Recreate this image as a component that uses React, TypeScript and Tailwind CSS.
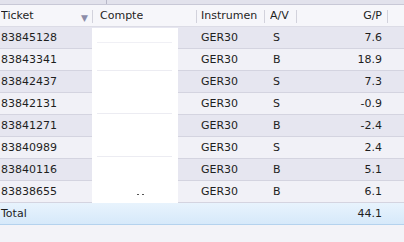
import React from 'react';

interface Trade {
  ticket: string;
  instrument: string;
  side: string;
  pnl: string;
}

const TRADES: Trade[] = [
  { ticket: '83845128', instrument: 'GER30', side: 'S', pnl: '7.6' },
  { ticket: '83843341', instrument: 'GER30', side: 'B', pnl: '18.9' },
  { ticket: '83842437', instrument: 'GER30', side: 'S', pnl: '7.3' },
  { ticket: '83842131', instrument: 'GER30', side: 'S', pnl: '-0.9' },
  { ticket: '83841271', instrument: 'GER30', side: 'B', pnl: '-2.4' },
  { ticket: '83840989', instrument: 'GER30', side: 'S', pnl: '2.4' },
  { ticket: '83840116', instrument: 'GER30', side: 'B', pnl: '5.1' },
  { ticket: '83838655', instrument: 'GER30', side: 'B', pnl: '6.1' }
];

const COLS = 'grid grid-cols-[93px_104px_68px_32px_91px_1fr]';

const HeaderCell: React.FC<{ label: string; pad: string; right?: boolean; sort?: boolean }> = ({ label, pad, right, sort }) => (
  <div className={`relative flex items-center h-full pt-px ${right ? 'justify-end' : ''} ${pad}`}>
    <span className="truncate">{label}</span>
    {sort && <span className="absolute right-[5px] top-[7px] text-[9px] text-[#8c8ca8]">▼</span>}
    <span className="absolute right-0 top-[5px] h-[13px] w-px bg-[#d2d2dc]" />
  </div>
);

export default function App() {
  return (
    <div
      className="relative w-[404px] h-[242px] overflow-hidden bg-[#f3f3f8] text-[11px] text-[#1e1e1e]"
      style={{ fontFamily: '"DejaVu Sans", Verdana, sans-serif' }}
    >
      <div className="h-[5px] flex bg-[#e2e2ec] border-b border-[#c8c8d6]">
        <div className="w-[107px] border-r border-[#b8b8c8]" />
      </div>
      <div className={`${COLS} h-[22px] bg-[#f6f6fa] border-b border-[#dcdce6]`}>
        <HeaderCell label="Ticket" pad="pl-[1px]" sort />
        <HeaderCell label="Compte" pad="pl-[7px]" />
        <HeaderCell label="Instrumen" pad="pl-[4px]" />
        <HeaderCell label="A/V" pad="pl-[5px]" />
        <HeaderCell label="G/P" pad="pr-[6px]" right />
        <div />
      </div>
      {TRADES.map((t, i) => (
        <div
          key={t.ticket}
          className={`${COLS} h-[22px] border-b border-[#d4d4e0] ${i % 2 === 0 ? 'bg-[#e6e6f0]' : 'bg-[#f1f1f7]'}`}
        >
          <div className="flex items-center pt-[2px] pl-[1px]">{t.ticket}</div>
          <div />
          <div className="flex items-center pt-[2px] pl-[4px]">{t.instrument}</div>
          <div className="flex items-center pt-[2px] pl-[8px]">{t.side}</div>
          <div className="flex items-center justify-end pt-[2px] pr-[6px]">{t.pnl}</div>
          <div />
        </div>
      ))}
      <div className={`${COLS} h-[22px] bg-gradient-to-b from-[#e8f3fd] to-[#d6e9fa] border-b border-[#b4d2ee]`}>
        <div className="flex items-center pt-px pl-[1px]">Total</div>
        <div />
        <div />
        <div />
        <div className="flex items-center justify-end pt-px pr-[6px]">44.1</div>
        <div />
      </div>
      {/* redacted account column */}
      <div className="absolute left-[92px] top-[28px] w-[86px] h-[175px] bg-white">
        <div className="absolute left-[5px] top-[14px] w-[75px] h-px bg-[#f0f0f5]" />
        <div className="absolute left-[5px] top-[42px] w-[75px] h-px bg-[#ececf2]" />
        <div className="absolute left-[5px] top-[85px] w-[75px] h-px bg-[#ececf2]" />
        <div className="absolute left-[5px] top-[128px] w-[75px] h-px bg-[#ececf2]" />
        <div className="absolute left-[45px] top-[166px] w-[2px] h-px bg-[#555]" />
        <div className="absolute left-[50px] top-[166px] w-[2px] h-px bg-[#555]" />
      </div>
    </div>
  );
}
